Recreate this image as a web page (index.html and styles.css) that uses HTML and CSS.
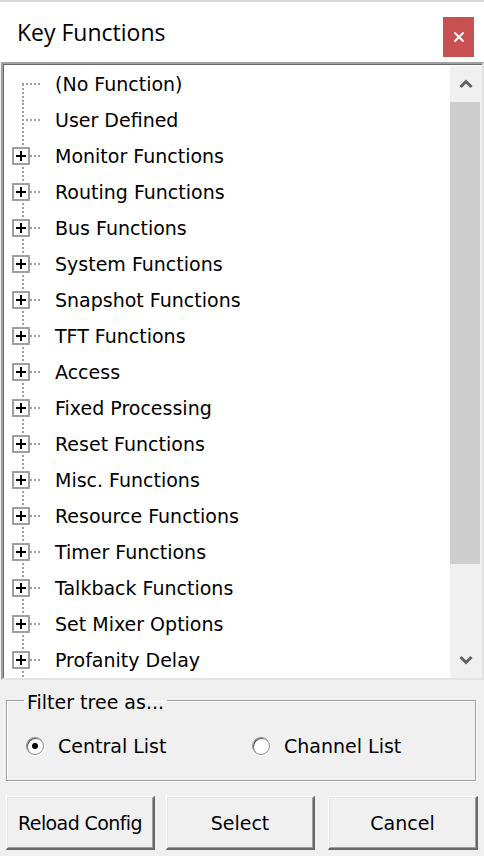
FILE: index.html
```html
<!DOCTYPE html>
<html>
<head>
<meta charset="utf-8">
<link rel="stylesheet" href="styles.css">
</head>
<body>
<div class="dialog">
  <div class="titlebar">
    <span class="title">Key Functions</span>
    <button class="close" aria-label="Close">
      <svg width="12" height="12" viewBox="0 0 12 12"><path d="M1.5 1.5 L10.5 10.5 M10.5 1.5 L1.5 10.5" stroke="#fff" stroke-width="2" fill="none"/></svg>
    </button>
  </div>

  <div class="tree">
    <ul class="tree-list">
      <li class="row first"><span class="gutter"></span><span class="label">(No Function)</span></li>
      <li class="row"><span class="gutter"></span><span class="label">User Defined</span></li>
      <li class="row"><span class="gutter"><span class="exp"></span></span><span class="label">Monitor Functions</span></li>
      <li class="row"><span class="gutter"><span class="exp"></span></span><span class="label">Routing Functions</span></li>
      <li class="row"><span class="gutter"><span class="exp"></span></span><span class="label">Bus Functions</span></li>
      <li class="row"><span class="gutter"><span class="exp"></span></span><span class="label">System Functions</span></li>
      <li class="row"><span class="gutter"><span class="exp"></span></span><span class="label">Snapshot Functions</span></li>
      <li class="row"><span class="gutter"><span class="exp"></span></span><span class="label">TFT Functions</span></li>
      <li class="row"><span class="gutter"><span class="exp"></span></span><span class="label">Access</span></li>
      <li class="row"><span class="gutter"><span class="exp"></span></span><span class="label">Fixed Processing</span></li>
      <li class="row"><span class="gutter"><span class="exp"></span></span><span class="label">Reset Functions</span></li>
      <li class="row"><span class="gutter"><span class="exp"></span></span><span class="label">Misc. Functions</span></li>
      <li class="row"><span class="gutter"><span class="exp"></span></span><span class="label">Resource Functions</span></li>
      <li class="row"><span class="gutter"><span class="exp"></span></span><span class="label">Timer Functions</span></li>
      <li class="row"><span class="gutter"><span class="exp"></span></span><span class="label">Talkback Functions</span></li>
      <li class="row"><span class="gutter"><span class="exp"></span></span><span class="label">Set Mixer Options</span></li>
      <li class="row"><span class="gutter"><span class="exp"></span></span><span class="label">Profanity Delay</span></li>
    </ul>
    <div class="scrollbar">
      <div class="sb-arrow">
        <svg width="14" height="10" viewBox="0 0 14 10"><path d="M1.5 8 L7 2.5 L12.5 8" stroke="#606060" stroke-width="3" fill="none"/></svg>
      </div>
      <div class="sb-thumb"></div>
      <div class="sb-track"></div>
      <div class="sb-arrow">
        <svg width="14" height="10" viewBox="0 0 14 10"><path d="M1.5 2 L7 7.5 L12.5 2" stroke="#606060" stroke-width="3" fill="none"/></svg>
      </div>
    </div>
  </div>

  <fieldset class="group">
    <legend>Filter tree as...</legend>
    <div class="radios">
      <label class="radio"><span class="dot checked"></span>Central List</label>
      <label class="radio"><span class="dot"></span>Channel List</label>
    </div>
  </fieldset>

  <div class="buttons">
    <button class="btn">Reload Config</button>
    <button class="btn">Select</button>
    <button class="btn">Cancel</button>
  </div>
</div>
</body>
</html>
```

FILE: styles.css
```css
html, body {
  margin: 0;
  padding: 0;
}
body {
  width: 484px;
  height: 856px;
  background: #f0f0f0;
  font-family: "DejaVu Sans", Verdana, sans-serif;
  font-size: 19px;
  color: #000;
  overflow: hidden;
}
.dialog {
  width: 484px;
  height: 856px;
  display: flex;
  flex-direction: column;
}
.titlebar {
  height: 60px;
  border-top: 2px solid #dadada;
  background: #fff;
  display: flex;
  align-items: flex-start;
  padding-left: 17px;
}
.title {
  font-family: "Open Sans", "Noto Sans", sans-serif;
  font-size: 23px;
  line-height: 30px;
  margin-top: 15px;
  color: #000;
}
.close {
  margin-left: auto;
  margin-right: 10px;
  margin-top: 15px;
  width: 31px;
  height: 40px;
  border: none;
  padding: 0;
  background: #c75050;
  display: flex;
  align-items: center;
  justify-content: center;
}
.close svg { display: block; }

.tree {
  margin-left: 1px;
  width: 479px;
  height: 612px;
  padding-top: 2px;
  border-top: 2px solid #a0a0a0;
  border-left: 2px solid #a0a0a0;
  border-right: 2px solid #e3e3e3;
  border-bottom: 2px solid #e3e3e3;
  box-shadow: inset 1px 1px 0 #696969;
  background: #fff;
  display: flex;
  overflow: hidden;
  flex: none;
}
.tree-list {
  list-style: none;
  margin: 0;
  padding: 0;
  flex: 1;
  overflow: hidden;
}
.row {
  height: 36px;
  display: flex;
  align-items: center;
}
.gutter {
  width: 52px;
  height: 36px;
  position: relative;
  flex: none;
}
.gutter::before {
  content: "";
  position: absolute;
  left: 19px;
  top: 0;
  width: 2px;
  height: 36px;
  background: repeating-linear-gradient(to bottom, transparent 0 1px, #a0a0a0 1px 3px, transparent 3px 4px);
}
.first .gutter::before {
  top: 17px;
  height: 19px;
}
.gutter::after {
  content: "";
  position: absolute;
  left: 19px;
  top: 17px;
  width: 20px;
  height: 2px;
  background: repeating-linear-gradient(to right, #a0a0a0 0 2px, transparent 2px 4px);
}
.exp {
  position: absolute;
  left: 9px;
  top: 9px;
  width: 14px;
  height: 14px;
  border: 2px solid #a0a0a0;
  background: #fff;
  z-index: 1;
}
.exp::before {
  content: "";
  position: absolute;
  left: 2px;
  top: 6px;
  width: 10px;
  height: 2px;
  background: #000;
}
.exp::after {
  content: "";
  position: absolute;
  left: 6px;
  top: 2px;
  width: 2px;
  height: 10px;
  background: #000;
}
.label {
  white-space: nowrap;
  line-height: 24px;
}

.scrollbar {
  width: 32px;
  flex: none;
  background: #f0f0f0;
  display: flex;
  flex-direction: column;
}
.sb-arrow {
  height: 36px;
  display: flex;
  align-items: center;
  justify-content: center;
}
.sb-arrow svg { display: block; }
.sb-thumb {
  height: 462px;
  width: 30px;
  background: #cdcdcd;
}
.sb-track {
  flex: 1;
}

.group {
  margin: 9px 8px 0 6px;
  padding: 0 0 0 16px;
  border: 1px solid #a0a0a0;
  box-shadow: inset 1px 1px 0 #fff, 1px 1px 0 #fff;
  height: 92px;
  box-sizing: border-box;
  min-width: 0;
  flex: none;
}
.group legend {
  padding: 0 3px;
  margin-left: 1px;
  line-height: 22px;
  position: relative;
  top: 2px;
}
.radios {
  display: flex;
  margin-top: 23px;
}
.radio {
  display: flex;
  align-items: center;
  width: 226px;
  line-height: 24px;
}
.dot {
  width: 16px;
  height: 16px;
  border-radius: 50%;
  background: #fff;
  border: 1px solid #8a8a8a;
  box-shadow: inset 1px 1px 0 #5a5a5a, 1px 1px 0 #fff;
  margin-right: 14px;
  margin-left: 3px;
  position: relative;
  flex: none;
}
.dot.checked::after {
  content: "";
  position: absolute;
  left: 5px;
  top: 5px;
  width: 6px;
  height: 6px;
  border-radius: 50%;
  background: #000;
}

.buttons {
  display: flex;
  margin-top: 15px;
  padding-left: 6px;
  gap: 11px;
  flex: none;
}
.btn {
  font-family: "DejaVu Sans", Verdana, sans-serif;
  font-size: 19px;
  color: #000;
  width: 149px;
  height: 54px;
  padding: 0;
  white-space: nowrap;
  background: #f0f0f0;
  border-style: solid;
  border-width: 1px 2px 2px 1px;
  border-color: #fff #696969 #696969 #fff;
  box-shadow: inset 1px 1px 0 #e3e3e3, inset -1px -1px 0 #a0a0a0;
}
.btn:first-child {
  letter-spacing: -0.6px;
}
.btn:last-child {
  margin-left: 2px;
  width: 150px;
}
```
